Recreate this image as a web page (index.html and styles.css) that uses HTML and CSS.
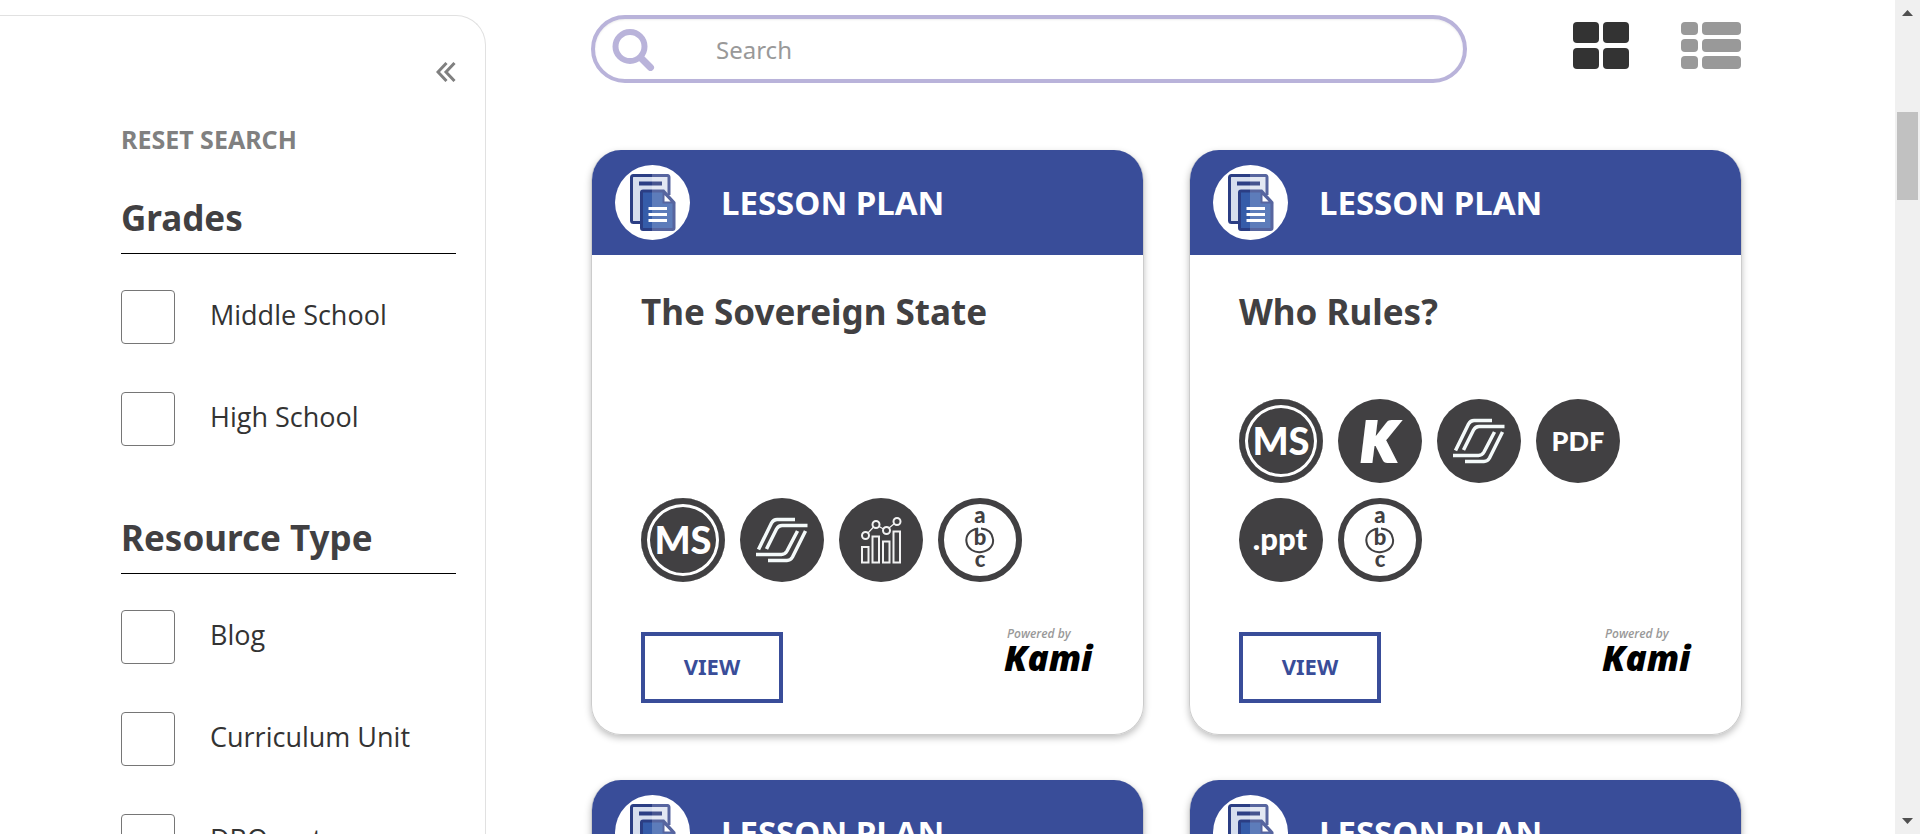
FILE: index.html
```html
<!DOCTYPE html>
<html lang="en">
<head>
<meta charset="utf-8">
<title>Resource Library</title>
<link rel="stylesheet" href="styles.css">
</head>
<body>
<svg class="sprite" aria-hidden="true">
  <symbol id="plan" viewBox="0 0 75 75">
    <circle cx="37.500" cy="37.500" r="37.500" fill="#fff"/>
    <rect x="16.500" y="10.500" width="37" height="47" rx="2" fill="#d6deee"/>
    <path d="M37 10.500h15q2 0 2 2V36H37z" fill="#e3e8f3"/>
    <path d="M37 10.500H18.500q-2 0-2 2v43q0 2 2 2H28" fill="none" stroke="#2b3e84" stroke-width="3"/>
    <path d="M37 10.500h15.500q1.500 0 1.500 2V30" fill="none" stroke="#57659f" stroke-width="3"/>
    <path d="M24 16.500h13v4H24z" fill="#2b3e84"/><path d="M37 16.500h10v4H37z" fill="#47558f"/>
    <path d="M26.500 26H49L59 38V64.500H26.500z" fill="#355ca9"/>
    <path d="M37 26H49L59 38V64.500H37z" fill="#5d7cba"/>
    <path d="M37 26H28q-1.500 0-1.500 1.500V63q0 1.500 1.500 1.500h9" fill="none" stroke="#2b3e84" stroke-width="3"/>
    <path d="M37 26H48.500L59 37.500V63q0 1.500-1.500 1.500H37" fill="none" stroke="#57659f" stroke-width="3"/>
    <path d="M48.500 27.500V37.500H58z" fill="#fff" stroke="#57659f" stroke-width="2"/>
    <path d="M33.500 43.500h18.500M33.500 49.500h18.500M33.500 55.500h18.500" stroke="#fff" stroke-width="3"/>
  </symbol>
  <symbol id="nearpod" viewBox="0 0 84 84">
    <g fill="none" stroke="#f4fafa" stroke-width="3.500">
      <path d="M18.500 51.500 31.500 25q2-3.500 5.500-3.500H55"/>
      <path d="M26.500 51 36.500 31q2-3.500 5.500-3.500H67.500"/>
      <path d="M65.500 33 52.500 59q-2 3.500-5.500 3.500H28"/>
      <path d="M57.500 33 47 53q-2 3.500-5.500 3.500H16"/>
    </g>
  </symbol>
  <symbol id="chart" viewBox="0 0 84 84">
    <g fill="none" stroke="#f2f2f2" stroke-width="2">
      <rect x="23" y="49" width="6.500" height="15.500"/><rect x="33.500" y="38.500" width="6.500" height="26"/>
      <rect x="44" y="43.500" width="6.500" height="21"/><rect x="54.500" y="33.500" width="6.500" height="31"/>
      <circle cx="26.500" cy="37.500" r="3.500"/><circle cx="37" cy="26.500" r="3.500"/>
      <circle cx="47.500" cy="32.500" r="3.500"/><circle cx="58" cy="23.500" r="3.500"/>
      <path d="m29 35 5.500-6M40 28.500l4.500 2.500M50 30l5.500-4.500" stroke-width="1.200"/>
    </g>
  </symbol>
  <symbol id="loop" viewBox="0 0 84 84">
    <path d="M40 30.500C31 32 27.500 38 28.500 44c1 7 8 11 15 10 8-1 12.500-7 11.500-13-1-7-6-10-12-10.500" fill="none" stroke="#414042" stroke-width="2"/>
  </symbol>
</svg>

<div class="page">
  <aside class="filters">
    <button class="collapse" type="button" aria-label="Collapse filters">
      <svg width="20" height="20" viewBox="0 0 20 20"><path d="M10.500 1 2 10l8.500 9M18.500 1 10 10l8.500 9" fill="none" stroke="#808080" stroke-width="3"/></svg>
    </button>
    <button class="reset" type="button">RESET SEARCH</button>
    <section class="group">
      <h2>Grades</h2>
      <label class="option"><input type="checkbox"><span>Middle School</span></label>
      <label class="option"><input type="checkbox"><span>High School</span></label>
    </section>
    <section class="group">
      <h2>Resource Type</h2>
      <label class="option"><input type="checkbox"><span>Blog</span></label>
      <label class="option"><input type="checkbox"><span>Curriculum Unit</span></label>
      <label class="option"><input type="checkbox"><span>DBQuest</span></label>
    </section>
  </aside>

  <main class="results">
    <div class="toolbar">
      <label class="search">
        <svg width="43" height="43" viewBox="0 0 43 43"><circle cx="18" cy="18.500" r="14.500" fill="none" stroke="#b9b3da" stroke-width="6"/><path d="m29 30 9.500 9.500" stroke="#b9b3da" stroke-width="7" stroke-linecap="round"/></svg>
        <input type="search" placeholder="Search" aria-label="Search">
      </label>
      <div class="views">
        <button type="button" aria-label="Grid view">
          <svg width="56" height="47" viewBox="0 0 56 47" fill="#333"><rect width="26" height="21" rx="4"/><rect x="30" width="26" height="21" rx="4"/><rect y="26" width="26" height="21" rx="4"/><rect x="30" y="26" width="26" height="21" rx="4"/></svg>
        </button>
        <button type="button" aria-label="List view">
          <svg width="61" height="47" viewBox="0 0 61 47" fill="#999"><rect width="17" height="13" rx="4"/><rect x="21" width="39" height="13" rx="4"/><rect y="17" width="17" height="13" rx="4"/><rect x="21" y="17" width="39" height="13" rx="4"/><rect y="34" width="17" height="13" rx="4"/><rect x="21" y="34" width="39" height="13" rx="4"/></svg>
        </button>
      </div>
    </div>

    <div class="cards">
      <article class="card">
        <header><svg class="plan"><use href="#plan"/></svg><span>LESSON PLAN</span></header>
        <div class="body">
          <h3>The Sovereign State</h3>
          <div class="badges">
            <span class="badge ms">MS</span>
            <span class="badge"><svg><use href="#nearpod"/></svg></span>
            <span class="badge"><svg><use href="#chart"/></svg></span>
            <span class="badge abc"><i>a</i><i>b</i><i>c</i><svg><use href="#loop"/></svg></span>
          </div>
          <div class="actions">
            <a class="view" href="#">VIEW</a>
            <div class="kami"><small>Powered by</small><b>Kami</b></div>
          </div>
        </div>
      </article>
      <article class="card">
        <header><svg class="plan"><use href="#plan"/></svg><span>LESSON PLAN</span></header>
        <div class="body">
          <h3>Who Rules?</h3>
          <div class="badges">
            <span class="badge ms">MS</span>
            <span class="badge letter">K</span>
            <span class="badge"><svg><use href="#nearpod"/></svg></span>
            <span class="badge pdf">PDF</span>
            <span class="badge ppt">.ppt</span>
            <span class="badge abc"><i>a</i><i>b</i><i>c</i><svg><use href="#loop"/></svg></span>
          </div>
          <div class="actions">
            <a class="view" href="#">VIEW</a>
            <div class="kami"><small>Powered by</small><b>Kami</b></div>
          </div>
        </div>
      </article>
      <article class="card">
        <header><svg class="plan"><use href="#plan"/></svg><span>LESSON PLAN</span></header>
      </article>
      <article class="card">
        <header><svg class="plan"><use href="#plan"/></svg><span>LESSON PLAN</span></header>
      </article>
    </div>
  </main>

  <div class="scrollbar" aria-hidden="true">
    <svg width="11" height="6" viewBox="0 0 11 6"><path d="M0 6 5.500 0 11 6z" fill="#505050"/></svg>
    <div class="track"><div class="thumb"></div></div>
    <svg width="11" height="6" viewBox="0 0 11 6"><path d="M0 0 5.500 6 11 0z" fill="#505050"/></svg>
  </div>
</div>
</body>
</html>
```
FILE: styles.css
```css
* { box-sizing: border-box; }
body {
  margin: 0;
  background: #fff;
  color: #333;
  font-family: "Noto Sans", "Open Sans", sans-serif;
}
button { border: 0; padding: 0; background: none; cursor: pointer; font-family: inherit; }
svg { display: block; }
.sprite { position: absolute; width: 0; height: 0; }

.page { display: flex; height: 100vh; overflow: hidden; }

.filters {
  flex: none;
  width: 486px;
  margin-top: 15px;
  padding: 46px 29px 0 121px;
  border: 1px solid #e1e1e1;
  border-width: 1px 1px 0 0;
  border-radius: 0 30px 0 0;
  display: flex;
  flex-direction: column;
}
.collapse { align-self: flex-end; }
.reset {
  align-self: flex-start;
  margin: 41px 0 19px;
  color: #808080;
  font-size: 25px;
  font-weight: 700;
  line-height: 32px;
}
.group h2 {
  margin: 20px 0 36px;
  padding-bottom: 11px;
  border-bottom: 1px solid #000;
  color: #414042;
  font-size: 35px;
  font-weight: 700;
  line-height: 48px;
}
.option { display: flex; gap: 35px; height: 54px; margin-bottom: 48px; }
.option input {
  appearance: none;
  flex: none;
  width: 54px;
  height: 54px;
  margin: 0;
  border: 1px solid #767676;
  border-radius: 4px;
}
.option span { font-family: "Open Sans", sans-serif; font-size: 27px; line-height: 50px; white-space: nowrap; }

.results { flex: 1; padding: 15px 153px 0 105px; }
.toolbar { display: flex; justify-content: space-between; gap: 106px; }
.search {
  flex: 1;
  display: flex;
  align-items: center;
  gap: 61px;
  height: 68px;
  padding-left: 17px;
  border: 4px solid #b9b3da;
  border-radius: 34px;
  box-shadow: inset 0 1px 2px rgba(0, 0, 0, .08);
}
.search input {
  flex: 1;
  min-width: 0;
  padding: 0;
  border: 0;
  outline: 0;
  background: none;
  font: 24px "Noto Sans", sans-serif;
}
.search input::placeholder { color: #999; }
.views { display: flex; align-items: flex-start; gap: 52px; padding-top: 7px; }

.cards {
  display: grid;
  grid-template-columns: 1fr 1fr;
  grid-auto-rows: 585px;
  gap: 45px;
  margin-top: 67px;
}
.card {
  display: flex;
  flex-direction: column;
  overflow: hidden;
  border: 1px solid #ccc;
  border-top: 0;
  border-radius: 30px;
  box-shadow: 0 3px 7px rgba(0, 0, 0, .25);
}
.card header {
  display: flex;
  align-items: center;
  gap: 31px;
  height: 105px;
  padding-left: 23px;
  background: #394d99;
  color: #fff;
  font-size: 33px;
  font-weight: 700;
}
.plan { width: 75px; height: 75px; }
.body { flex: 1; display: flex; flex-direction: column; padding: 30px 47px 31px 49px; }
.body h3 { margin: 0; color: #414042; font-size: 35px; font-weight: 700; line-height: 54px; }

.badges { display: flex; flex-wrap: wrap; gap: 15px; margin-top: auto; }
.badge {
  position: relative;
  display: flex;
  align-items: center;
  justify-content: center;
  width: 84px;
  height: 84px;
  border-radius: 50%;
  background: #414042;
  color: #fff;
  font-family: Lato, sans-serif;
  font-weight: 900;
  line-height: 1;
}
.badge svg { width: 84px; height: 84px; }
.ms { padding-bottom: 2px; box-shadow: inset 0 0 0 6px #414042, inset 0 0 0 9px #fff; font-size: 38px; }
.letter { padding-right: 3px; font-size: 54px; font-style: italic; -webkit-text-stroke: 4px #fff; }
.pdf { padding-bottom: 2px; font-size: 27px; }
.ppt { padding: 0 2px 4px 0; font-size: 31px; }
.abc { flex-direction: column; padding-bottom: 7px; border: 6px solid #414042; background: #fff; color: #414042; font-size: 22px; line-height: 22px; }
.abc i { font-style: normal; }
.abc svg { position: absolute; inset: -6px; }

.actions { display: flex; justify-content: space-between; margin-top: 50px; }
.view {
  width: 142px;
  height: 71px;
  border: 4px solid #394d99;
  color: #394d99;
  font-size: 22px;
  font-weight: 700;
  line-height: 61px;
  text-align: center;
  text-decoration: none;
}
.kami { width: 92px; margin-top: -6px; font-family: "Open Sans", sans-serif; font-style: italic; }
.kami small { display: block; padding-left: 3px; color: #999; font-size: 12px; font-weight: 600; line-height: 16px; }
.kami b { display: block; color: #000; font-size: 35px; font-weight: 800; line-height: 32px; }

.scrollbar {
  flex: none;
  width: 25px;
  display: flex;
  flex-direction: column;
  align-items: center;
  padding: 10px 2px;
  background: #f0f0f0;
}
.track { flex: 1; width: 100%; padding-top: 96px; }
.thumb { height: 88px; background: #c1c1c1; }
```
